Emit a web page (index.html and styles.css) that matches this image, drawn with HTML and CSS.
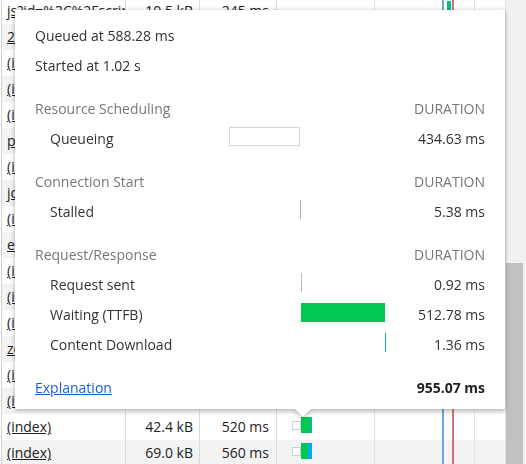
FILE: index.html
```html
<!DOCTYPE html>
<html lang="en">
<head>
<meta charset="utf-8">
<title>Network timing</title>
<link rel="stylesheet" href="styles.css">
</head>
<body>
<div class="panel">
  <div class="grid">
    <div class="rows">
      <div class="row"><span class="c-name"><a>js?id=%3C%2Fscript</a></span><span class="c-size">10.5 kB</span><span class="c-time">245 ms</span><span class="c-wf"><i class="wf-gap wf-top"></i><i class="b-green b-top"></i><i class="b-blue b-top"></i></span></div>
      <div class="row alt"><span class="c-name"><a>2.js</a></span><span class="c-size">3.1 kB</span><span class="c-time">212 ms</span><span class="c-wf"></span></div>
      <div class="row"><span class="c-name"><a>(index)</a></span><span class="c-size">1.2 kB</span><span class="c-time">198 ms</span><span class="c-wf"></span></div>
      <div class="row alt"><span class="c-name"><a>(index)</a></span><span class="c-size">1.2 kB</span><span class="c-time">201 ms</span><span class="c-wf"></span></div>
      <div class="row"><span class="c-name"><a>(index)</a></span><span class="c-size">1.4 kB</span><span class="c-time">205 ms</span><span class="c-wf"></span></div>
      <div class="row alt"><span class="c-name"><a>p.js</a></span><span class="c-size">4.8 kB</span><span class="c-time">230 ms</span><span class="c-wf"></span></div>
      <div class="row"><span class="c-name"><a>(index)</a></span><span class="c-size">1.3 kB</span><span class="c-time">240 ms</span><span class="c-wf"></span></div>
      <div class="row alt"><span class="c-name"><a>jquery.js</a></span><span class="c-size">30.2 kB</span><span class="c-time">260 ms</span><span class="c-wf"></span></div>
      <div class="row"><span class="c-name"><a>(index)</a></span><span class="c-size">1.2 kB</span><span class="c-time">270 ms</span><span class="c-wf"></span></div>
      <div class="row alt"><span class="c-name"><a>embed.js</a></span><span class="c-size">8.7 kB</span><span class="c-time">290 ms</span><span class="c-wf"></span></div>
      <div class="row"><span class="c-name"><a>(index)</a></span><span class="c-size">1.1 kB</span><span class="c-time">310 ms</span><span class="c-wf"></span></div>
      <div class="row alt"><span class="c-name"><a>(index)</a></span><span class="c-size">1.1 kB</span><span class="c-time">330 ms</span><span class="c-wf"></span></div>
      <div class="row"><span class="c-name"><a>(index)</a></span><span class="c-size">1.1 kB</span><span class="c-time">350 ms</span><span class="c-wf"></span></div>
      <div class="row alt"><span class="c-name"><a>zepto.js</a></span><span class="c-size">9.9 kB</span><span class="c-time">380 ms</span><span class="c-wf"></span></div>
      <div class="row"><span class="c-name"><a>(index)</a></span><span class="c-size">12.0 kB</span><span class="c-time">420 ms</span><span class="c-wf"></span></div>
      <div class="row alt"><span class="c-name"><a>(index)</a></span><span class="c-size">20.3 kB</span><span class="c-time">470 ms</span><span class="c-wf"></span></div>
      <div class="row"><span class="c-name"><a>(index)</a></span><span class="c-size">42.4 kB</span><span class="c-time">520 ms</span><span class="c-wf"><i class="wf-gap"></i><i class="b-box"></i><i class="b-green" style="width:10px"></i><i class="b-blue" style="width:1px"></i></span></div>
      <div class="row alt"><span class="c-name"><a>(index)</a></span><span class="c-size">69.0 kB</span><span class="c-time">560 ms</span><span class="c-wf"><i class="wf-gap"></i><i class="b-box"></i><i class="b-green" style="width:7px"></i><i class="b-blue" style="width:4px"></i></span></div>
    </div>
    <div class="wf-lines">
      <i class="vline grid-a"></i>
      <i class="vline grid-b"></i>
      <i class="vline dom-line"></i>
      <i class="vline load-line"></i>
    </div>
  </div>
  <div class="scrollbar"><div class="thumb"></div></div>

  <div class="popover">
    <div class="p-row"><span class="p-label">Queued at 588.28 ms</span></div>
    <div class="p-row"><span class="p-label">Started at 1.02 s</span></div>

    <div class="p-row p-head"><span class="p-label">Resource Scheduling</span><span class="p-dur">DURATION</span></div>
    <div class="p-row"><span class="p-label sub">Queueing</span><span class="p-bars"><i class="t-bar queueing" style="left:0%;width:45.51%"></i></span><span class="p-dur">434.63 ms</span></div>

    <div class="p-row p-head"><span class="p-label">Connection Start</span><span class="p-dur">DURATION</span></div>
    <div class="p-row"><span class="p-label sub">Stalled</span><span class="p-bars"><i class="t-bar stalled" style="left:45.51%;width:0.56%"></i></span><span class="p-dur">5.38 ms</span></div>

    <div class="p-row p-head"><span class="p-label">Request/Response</span><span class="p-dur">DURATION</span></div>
    <div class="p-row"><span class="p-label sub">Request sent</span><span class="p-bars"><i class="t-bar sending" style="left:46.07%;width:0.1%"></i></span><span class="p-dur">0.92 ms</span></div>
    <div class="p-row"><span class="p-label sub">Waiting (TTFB)</span><span class="p-bars"><i class="t-bar waiting" style="left:46.17%;width:53.69%"></i></span><span class="p-dur">512.78 ms</span></div>
    <div class="p-row"><span class="p-label sub">Content Download</span><span class="p-bars"><i class="t-bar receiving" style="left:99.86%;width:0.14%"></i></span><span class="p-dur">1.36 ms</span></div>

    <div class="p-row p-foot"><a class="p-link" href="#">Explanation</a><span class="p-dur total">955.07 ms</span></div>
    <i class="arrow"></i>
  </div>
</div>
</body>
</html>
```

FILE: styles.css
```css
* { box-sizing: border-box; }

html, body {
  margin: 0;
  padding: 0;
  width: 526px;
  height: 464px;
  overflow: hidden;
  background: #fff;
  font-family: "Open Sans", "Noto Sans", sans-serif;
  font-size: 14px;
  color: #222;
}

.panel {
  position: relative;
  display: flex;
  width: 526px;
  height: 464px;
}

/* ---------- background network grid ---------- */
.grid {
  position: relative;
  flex: 1;
  margin-left: 1px;
  border-left: 1px solid #d4d4d4;
  overflow: hidden;
}

.rows {
  display: flex;
  flex-direction: column;
  margin-top: -2px;
}

.row {
  display: flex;
  height: 26px;
  line-height: 26px;
  background: #fff;
  white-space: nowrap;
}

.row.alt { background: #f3f3f3; }

.c-name {
  width: 124px;
  padding-left: 5px;
  border-right: 1px solid #dadada;
  overflow: hidden;
}

.c-name a {
  color: #222;
  text-decoration: underline;
}

.c-size {
  width: 74px;
  padding-right: 6px;
  text-align: right;
  border-right: 1px solid #dadada;
}

.c-time {
  width: 77px;
  padding-right: 7px;
  text-align: right;
  border-right: 1px solid #dadada;
}

.c-wf {
  flex: 1;
  display: flex;
  align-items: center;
  padding-bottom: 4px;
}

.wf-gap { width: 15px; flex: none; }
.wf-gap.wf-top { width: 170px; }

.b-box {
  width: 9px;
  height: 9px;
  border: 1px solid #cfcfcf;
  background: #fff;
  flex: none;
}

.b-green {
  height: 16px;
  background: #00c853;
  flex: none;
}

.b-blue {
  height: 16px;
  background: #03a9f4;
  flex: none;
}

.b-green.b-top { width: 3px; }
.b-blue.b-top { width: 1px; }

.wf-lines {
  position: absolute;
  top: 0;
  bottom: 0;
  left: 0;
  right: 0;
  pointer-events: none;
}

.vline {
  position: absolute;
  top: 0;
  bottom: 0;
  width: 1px;
}

.grid-a { left: 372px; background: #e3e3e3; }
.grid-b { left: 472px; background: #e3e3e3; }
.dom-line { left: 440px; width: 2px; background: #6f a3e2; background: #6fa3e2; }
.load-line { left: 450px; width: 2px; background: #d37474; }

/* ---------- scrollbar ---------- */
.scrollbar {
  width: 21px;
  flex: none;
  background: #f1f1f1;
  border-left: 1px solid #e6e6e6;
  padding-top: 263px;
}

.thumb {
  width: 17px;
  height: 210px;
  background: #c1c1c1;
}

/* ---------- timing popover ---------- */
.popover {
  position: absolute;
  left: 15px;
  top: 10px;
  width: 490px;
  height: 399px;
  padding: 10px 20px 7px;
  background: #fff;
  border-radius: 2px;
  filter: drop-shadow(0 1px 2.5px rgba(0, 0, 0, 0.32));
  color: #333;
  display: flex;
  flex-direction: column;
}

.p-row {
  display: flex;
  align-items: center;
  height: 30px;
  flex: none;
  white-space: nowrap;
}

.p-label {
  width: 194px;
  flex: none;
}

.p-label.sub { padding-left: 15px; }

.p-head { margin-top: 13px; color: #777; }
.p-head .p-label { width: 350px; }

.p-bars {
  position: relative;
  width: 156px;
  height: 30px;
  flex: none;
}

.t-bar {
  position: absolute;
  top: 4px;
  bottom: 7px;
  min-width: 1px;
}

.t-bar.queueing { background: #fff; border: 1px solid #d6d6d6; }
.t-bar.stalled { background: #b5b5b5; }
.t-bar.sending { background: #b0bec5; }
.t-bar.waiting { background: #00c853; }
.t-bar.receiving { background: #03a9f4; }

.p-dur {
  margin-left: auto;
  text-align: right;
}

.p-foot { margin-top: 13px; }

.p-link {
  color: #1a5fd8;
  text-decoration: underline;
}

.p-dur.total {
  font-weight: 700;
  color: #222;
}

.arrow {
  position: absolute;
  top: 100%;
  left: 280px;
  width: 0;
  height: 0;
  border-left: 8px solid transparent;
  border-right: 8px solid transparent;
  border-top: 8px solid #fff;
}
```
